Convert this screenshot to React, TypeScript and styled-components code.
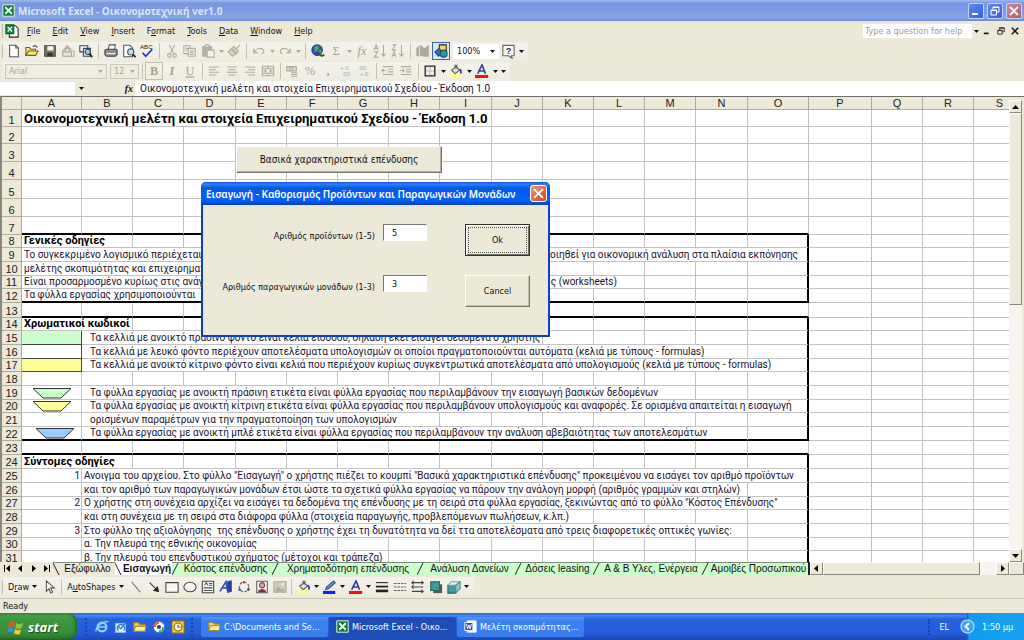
import React from "react";
import styled, { createGlobalStyle, css } from "styled-components";

const UI = '"DejaVu Sans Condensed", "DejaVu Sans", "Noto Sans", sans-serif';
const SHEET = '"Liberation Sans", Arial, sans-serif';
const CELL = 'Roboto, "Liberation Sans", sans-serif';
const FACE = "#ece9d8";
const LINE = "#c3c3c6";

const Global = createGlobalStyle`
  * { box-sizing: border-box; }
  body { margin: 0; font-family: ${UI}; font-size: 9px; color: #111; }
  button, input, select { font: inherit; color: inherit; margin: 0; padding: 0; border: 0; border-radius: 0; background: none; outline: 0; }
  svg { display: block; flex: none; }
`;

const Desktop = styled.div`
  position: relative;
  display: flex;
  flex-direction: column;
  height: 100vh;
  overflow: hidden;
  background: ${FACE};
`;

/* ---------- window chrome ---------- */
const TitleBar = styled.header`
  display: flex;
  align-items: center;
  gap: 3px;
  height: 21px;
  flex: none;
  padding: 0 2px;
  background: linear-gradient(#9db8ef 0, #7c98e2 3px, #7b97e0 10px, #84a8ec 18px, #6f86cf 21px);
  color: #dbe4f8;
`;
const WindowTitle = styled.h1`
  flex: 1;
  margin: 0;
  font: bold 10px/20px "Noto Sans", sans-serif;
  white-space: nowrap;
`;
const CaptionButton = styled.button<{ $close?: boolean }>`
  display: grid;
  place-items: center;
  width: 16px;
  height: 16px;
  border: 1px solid #c3d2f5;
  border-radius: 2px;
  background: ${(p) => (p.$close ? "linear-gradient(135deg,#c98a9b,#b05a6c)" : "linear-gradient(135deg,#5e85ee,#3a62dd)")};
`;
const MenuBar = styled.nav`
  display: flex;
  align-items: center;
  height: 20px;
  flex: none;
  padding: 0 2px;
`;
const Menus = styled.div`
  display: flex;
  gap: 12px;
  flex: 1;
  padding-left: 8px;
`;
const MenuItem = styled.button`
  line-height: 14px;
  white-space: nowrap;
`;
const Grip = styled.span`
  width: 1px;
  height: 14px;
  margin-right: 2px;
  background: #c0bdac;
`;
const Toolbar = styled.div<{ $h: number }>`
  display: flex;
  align-items: center;
  height: ${(p) => p.$h}px;
  flex: none;
  padding-left: 2px;
`;
const Bar = styled.div`
  display: flex;
  align-items: center;
  height: 19px;
  padding-right: 3px;
  border-radius: 2px;
  background: linear-gradient(#f3f2ea, #eeece0);
`;
const ToolButton = styled.button<{ $boxed?: "grey" | "blue" }>`
  display: grid;
  place-items: center;
  width: 18px;
  height: 18px;
  ${(p) => p.$boxed === "grey" && css`border: 1px solid #c2bfae;`}
  ${(p) => p.$boxed === "blue" && css`border: 1px solid #3a62b4; background: #dfe6f4;`}
`;
const DropButton = styled.button`
  display: grid;
  place-items: center;
  width: 8px;
  height: 18px;
`;
const Divider = styled.span<{ $w: number }>`
  width: ${(p) => p.$w}px;
  height: 16px;
  background: linear-gradient(#c5c2b2, #c5c2b2) center / 1px 100% no-repeat;
`;
const TextButton = styled.button`
  display: flex;
  align-items: center;
  gap: 3px;
  height: 18px;
  padding: 0 3px;
  white-space: nowrap;
`;
const Combo = styled.label<{ $w: number; $off?: boolean }>`
  display: flex;
  align-items: center;
  width: ${(p) => p.$w}px;
  height: 15px;
  margin-left: 3px;
  padding: 0 3px;
  border: 1px solid ${(p) => (p.$off ? "#cac7b8" : "#fff")};
  background: ${(p) => (p.$off ? "#efede1" : "#fff")};
  color: ${(p) => (p.$off ? "#aaa799" : "#111")};
  select { flex: 1; min-width: 0; appearance: none; }
`;
const HelpBox = styled.label`
  display: flex;
  align-items: center;
  width: 117px;
  height: 14px;
  background: #fff;
  input { flex: 1; min-width: 0; padding-left: 2px; }
  input::placeholder { color: #9b9b9b; opacity: 1; }
  span { display: grid; place-items: center; width: 8px; height: 14px; background: ${FACE}; }
`;
const DocButton = styled.button`
  display: grid;
  place-items: center;
  width: 14px;
  height: 14px;
`;
const FormulaBar = styled.div`
  display: flex;
  align-items: center;
  height: 15px;
  flex: none;
  font: 10px/14px ${CELL};
`;
const NameBox = styled.input`
  && { width: 75px; height: 13px; background: #fff; }
`;
const NameGap = styled.span`
  display: flex;
  align-items: center;
  justify-content: space-between;
  width: 60px;
  padding: 0 2px 0 4px;
`;
const Fx = styled.i`
  font: italic bold 10px/12px "Liberation Serif", serif;
`;
const FormulaInput = styled.input`
  && { flex: 1; height: 15px; padding-left: 5px; background: #fff; color: #1a1430; }
`;

/* ---------- worksheet ---------- */
const SheetFrame = styled.main`
  display: flex;
  flex: 1;
  min-height: 0;
  border-top: 1px solid #716f64;
  border-left: 2px solid #8a887c;
`;
const SheetView = styled.div`
  position: relative;
  flex: 1;
  min-width: 0;
  overflow: hidden;
  background: #fff;
`;
const Grid = styled.table`
  width: 100%;
  table-layout: fixed;
  border-collapse: separate;
  border-spacing: 0;
  font: 10px/12px ${CELL};
  color: #1a1430;
`;
const Head = styled.th`
  padding: 0;
  border-right: 1px solid #b0ad9d;
  border-bottom: 1px solid #b0ad9d;
  background: ${FACE};
  color: #222;
  font: 11px/12px ${SHEET};
  text-align: center;
  vertical-align: bottom;
  overflow: hidden;
`;
type Fill = "green" | "yellow" | "white";
const fills = { green: "#ccffcc", yellow: "#ffff99", white: "#ffffff" };
const Cell = styled.td<{ $bottom?: boolean; $side?: boolean; $title?: "big" | "small"; $pad?: number; $end?: number; $fill?: Fill }>`
  padding: 0 ${(p) => p.$end ?? 2}px 0 ${(p) => p.$pad ?? 2}px;
  border-right: ${(p) => (p.$side ? "2px solid #000" : `1px solid ${LINE}`)};
  border-bottom: ${(p) => (p.$bottom ? "2px solid #000" : `1px solid ${LINE}`)};
  white-space: nowrap;
  vertical-align: bottom;
  text-align: ${(p) => (p.$end !== undefined ? "right" : "left")};
  ${(p) => p.$title === "small" && css`font-size: 11px; font-weight: bold; color: #000;`}
  ${(p) => p.$title === "big" && css`font-size: 13px; line-height: 15px; font-weight: bold; color: #000;`}
  ${(p) => p.$fill && css`
    background: ${fills[p.$fill]};
    border-right-color: #444;
    border-bottom-color: #444;
  `}
  svg { margin: 0 auto; }
`;
const Line = styled.tr<{ $h: number }>`
  height: ${(p) => p.$h}px;
  td, th { height: ${(p) => p.$h}px; }
`;
const SheetButton = styled.button`
  && {
    position: absolute;
    left: 234px;
    top: 49px;
    width: 206px;
    height: 27px;
    border: 1px solid;
    border-color: #fff #77756a #77756a #fff;
    box-shadow: inset -1px -1px #b5b2a2;
    background: ${FACE};
    font: 10px/14px ${UI};
  }
`;
const VScroll = styled.div`
  display: flex;
  flex-direction: column;
  width: 15px;
  padding: 3px 2px 0 0;
  background: ${FACE};
`;
const ScrollButton = styled.button`
  && {
    display: grid;
    place-items: center;
    width: 13px;
    height: 13px;
    flex: none;
    border: 1px solid;
    border-color: #fff #8a887c #8a887c #fff;
    background: ${FACE};
  }
`;
const Track = styled.div`
  display: flex;
  flex: 1;
  background: #f6f5ef;
`;
const Thumb = styled.span<{ $w: string; $h: string }>`
  width: ${(p) => p.$w};
  height: ${(p) => p.$h};
  border: 1px solid;
  border-color: #fff #8a887c #8a887c #fff;
  background: ${FACE};
`;

/* ---------- sheet tabs ---------- */
const TabStrip = styled.div`
  display: flex;
  height: 13px;
  flex: none;
  padding-left: 1px;
  background: ${FACE};
`;
const TabNav = styled.button`
  display: grid;
  place-items: center;
  width: 13px;
  height: 13px;
`;
const Tab = styled.button<{ $w: number; $active?: boolean; $plain?: boolean }>`
  && {
    display: flex;
    align-items: center;
    width: ${(p) => p.$w}px;
    height: 13px;
    border-top: 1px solid ${(p) => (p.$active ? "#fff" : "#7d8d7d")};
    background: ${(p) => (p.$active ? "#fff" : p.$plain ? FACE : "#ccffcc")};
    font: ${(p) => (p.$active ? "bold" : "normal")} 10px/12px ${SHEET};
    white-space: nowrap;
  }
  span { flex: 1; text-align: center; }
`;
const HScroll = styled.div`
  display: flex;
  flex: 1;
  border-left: 2px solid #222;
`;

const StatusBar = styled.footer`
  height: 15px;
  flex: none;
  padding-left: 3px;
  border-top: 1px solid #c9c6b6;
  line-height: 14px;
`;

/* ---------- taskbar ---------- */
const TaskBar = styled.footer`
  display: flex;
  align-items: center;
  height: 27px;
  flex: none;
  background: linear-gradient(#2a66d8 0, #3f87f0 3px, #2862dc 6px, #245bdb 20px, #1d48b4 27px);
  color: #fff;
`;
const StartButton = styled.button`
  && {
    display: flex;
    align-items: center;
    gap: 4px;
    width: 77px;
    height: 25px;
    padding-left: 8px;
    border-radius: 0 8px 8px 0;
    background: linear-gradient(#4fa34f 0, #3f983f 5px, #37903a 18px, #2a762b 25px);
    box-shadow: inset -2px 0 3px #23692a;
    color: #fff;
    font: italic bold 13px/18px "Open Sans", sans-serif;
    text-shadow: 1px 1px 1px #1c4d1c;
  }
`;
const QuickLaunch = styled.div`
  display: flex;
  align-items: center;
  gap: 4px;
  width: 108px;
  margin: 0 8px;
  padding-left: 7px;
  border-left: 2px dotted #1b44a8;
  border-right: 2px dotted #1b44a8;
`;
const IconButton = styled.button`
  display: grid;
  place-items: center;
  width: 15px;
  height: 18px;
`;
const Task = styled.button<{ $active?: boolean }>`
  && {
    display: flex;
    align-items: center;
    gap: 3px;
    width: 127px;
    height: 20px;
    margin-right: 1px;
    padding-left: 7px;
    border-radius: 2px;
    background: ${(p) => (p.$active ? "#1e4eb5" : "linear-gradient(#5a96f8, #3c80f2 4px, #3a7cec)")};
    color: #fff;
    white-space: nowrap;
  }
`;
const Tray = styled.div`
  display: flex;
  align-items: center;
  margin-left: auto;
  height: 27px;
`;
const Language = styled.button`
  && { color: #fff; margin-right: 11px; padding-left: 9px; border-left: 2px dotted #1b44a8; line-height: 16px; }
`;
const Clock = styled.div`
  display: flex;
  align-items: center;
  gap: 7px;
  width: 64px;
  height: 27px;
  background: linear-gradient(90deg, transparent 7px, #0f5fb8 7px, #129bea 9px, #18a2ee);
  white-space: nowrap;
`;

/* ---------- dialog ---------- */
const Dialog = styled.form`
  position: absolute;
  left: 201px;
  top: 182px;
  width: 349px;
  height: 155px;
  border: 2px solid #0a3fd0;
  border-top: 0;
  border-radius: 5px 5px 0 0;
  background: ${FACE};
`;
const DialogTitle = styled.div`
  display: flex;
  align-items: center;
  justify-content: space-between;
  height: 23px;
  margin: 0 -2px;
  padding: 0 3px 0 5px;
  border-radius: 5px 5px 0 0;
  background: linear-gradient(#0a4fd6 0, #2f80fb 2px, #0558e6 6px, #0562f6 18px, #0440c4 23px);
  color: #fff;
  h2 { margin: 0; font: 600 10px/20px "Noto Sans", sans-serif; white-space: nowrap; }
`;
const DialogClose = styled.button`
  && {
    display: grid;
    place-items: center;
    width: 17px;
    height: 17px;
    border: 1px solid #fff;
    border-radius: 3px;
    background: linear-gradient(135deg, #f0937a, #d8431c);
  }
`;
const Fields = styled.div`
  display: grid;
  grid-template-columns: 172px 44px 65px;
  grid-auto-rows: 32px;
  row-gap: 19px;
  padding: 19px 0 0 0;
  label { padding-top: 6px; line-height: 12px; text-align: right; white-space: nowrap; }
`;
const NumberBox = styled.input`
  && {
    width: 44px;
    height: 17px;
    margin-left: 8px;
    padding-left: 8px;
    border: 1px solid;
    border-color: #77756a #fff #fff #77756a;
    background: #fff;
  }
`;
const PushButton = styled.button<{ $primary?: boolean }>`
  && {
    width: 65px;
    height: 32px;
    margin-left: 46px;
    border: 1px solid;
    border-color: ${(p) => (p.$primary ? "#333" : "#fff #77756a #77756a #fff")};
    box-shadow: ${(p) => (p.$primary ? "inset 1px 1px #fff, inset -1px -1px #77756a" : "inset -1px -1px #c5c2b2")};
    ${(p) => p.$primary && css`outline: 1px dotted #555; outline-offset: -4px;`}
  }
`;

/* ---------- drawings ---------- */
const G = "#aeab9c";
const Arrow = ({ c = "#111" }: { c?: string }) => (
  <svg width="5" height="3" viewBox="0 0 5 3"><path d="M0 0h5L2.500 3z" fill={c} /></svg>
);
const Ic = ({ children, s = 14 }: { children: React.ReactNode; s?: number }) => (
  <svg width={s} height={s} viewBox="0 0 16 16" fill="none" stroke="#222" strokeWidth="1.2">{children}</svg>
);
const LetterA = "M1 7l2.500-6L6 7M2 5h3";
const LetterZ = "M1.500 1h4L1.500 7h4.500";
const Sort = ({ up }: { up?: boolean }) => (
  <Ic>
    <path d={up ? LetterA : LetterZ} stroke={G} />
    <g transform="translate(0 8)"><path d={up ? LetterZ : LetterA} stroke={G} /></g>
    <path d="M12 1v13M9.500 11l2.500 3 2.500-3" stroke={G} />
  </Ic>
);
const Glyph = ({ t, italic, bold, under, color = "#a4a192" }: { t: string; italic?: boolean; bold?: boolean; under?: boolean; color?: string }) => (
  <Ic><text x="8" y="13" textAnchor="middle" fontSize="14" fill={color} stroke="none" fontFamily="Liberation Serif"
    fontStyle={italic ? "italic" : "normal"} fontWeight={bold ? "bold" : "normal"} textDecoration={under ? "underline" : "none"}>{t}</text></Ic>
);
const Lines = ({ k }: { k: "l" | "c" | "r" }) => {
  const x = { l: 2, c: 4, r: 6 }[k];
  return <Ic><path d={`M2 3.500h12M${x} 6.500h8M2 9.500h12M${x} 12.500h8`} stroke={G} /></Ic>;
};
const Decimals = ({ a, b }: { a: string; b: string }) => (
  <Ic>
    <text x="1" y="7" fontSize="7" fill={G} stroke="none" fontFamily="Liberation Sans">{a}</text>
    <text x="3" y="14" fontSize="7" fill={G} stroke="none" fontFamily="Liberation Sans">{b}</text>
  </Ic>
);
const Bucket = () => (
  <Ic><path d="M1 11.500h12v4H1z" fill="#ffff80" stroke="none" /><path d="M3 7l5-4 4 4-5 4z" fill="#dfe2ee" stroke="#555" /><path d="M7 5V1.500h2V5" stroke="#555" /><path d="M12 6c2 1 2 3 1.500 5" stroke="#3347a5" strokeWidth="2" /></Ic>
);
const FontColor = () => (
  <Ic><path d="M0 12.500h15V16H0z" fill="#f01010" stroke="none" /><path d="M3 11L8 1l4 10M5 8h6" stroke="#2c4391" strokeWidth="1.800" /></Ic>
);
const PenColor = () => (
  <Ic><path d="M0 12.500h14V16H0z" fill="#1020f0" stroke="none" /><path d="M3 11l1-3 8-7 2 2-8 7z" fill="#7f96cf" stroke="#334a94" /></Ic>
);
const ExcelLogo = ({ s }: { s: number }) => (
  <Ic s={s}><path d="M1 1h14v14H1z" fill="#0d7a33" stroke="#e8f3e8" /><path d="M4 4l8 8M12 4l-8 8" stroke="#fff" strokeWidth="2.200" /></Ic>
);
const WorkbookLogo = () => (
  <Ic><path d="M5 2h7l3 3v10H5z" fill="#fff" stroke="#222" /><path d="M1 1h9v10H1z" fill="#0d8a38" stroke="#0a5c26" /><path d="M3 3.500l5 5M8 3.500l-5 5" stroke="#fff" strokeWidth="1.500" /></Ic>
);
const Folder = ({ s = 14 }: { s?: number }) => (
  <Ic s={s}><path d="M1 13V3h5l1.500 2H14v8z" fill="#f8d66a" stroke="#a8842a" /><path d="M1 13l2-6h12l-1.500 6z" fill="#fff0a0" stroke="#a8842a" /></Ic>
);
const Trapezoid = ({ c }: { c: string }) => (
  <svg width="40" height="11" viewBox="0 0 40 11"><path d="M1 .5h38l-10 9.500H11z" fill={c} stroke="#333" /></svg>
);
const Tri = ({ d }: { d: string }) => <svg width="9" height="7" viewBox="0 0 9 7"><path d={d} fill="#000" /></svg>;
const ScrollArrow = ({ up }: { up?: boolean }) => (
  <svg width="7" height="4" viewBox="0 0 7 4"><path d={up ? "M0 4h7L3.500 0z" : "M0 0h7L3.500 4z"} fill="#000" /></svg>
);
const Slash = ({ back }: { back?: boolean }) => (
  <svg width="7" height="12" viewBox="0 0 7 12"><path d={back ? "M0 0L6 12" : "M6 0L0 12"} stroke="#222" fill="none" /></svg>
);
const Cross = ({ c, s = 10 }: { c: string; s?: number }) => (
  <svg width={s} height={s} viewBox="0 0 10 10"><path d="M1 1l8 8M9 1L1 9" stroke={c} strokeWidth="1.800" /></svg>
);
const Restore = ({ c, s = 10 }: { c: string; s?: number }) => (
  <svg width={s} height={s} viewBox="0 0 10 10" fill="none" stroke={c}><path d="M3 3V1h6v5H7M3 1.500h6" /><path d="M1 4h5.500v5H1zM1 4.500h5.500" /></svg>
);
const Minus = ({ c, s = 10 }: { c: string; s?: number }) => (
  <svg width={s} height={s} viewBox="0 0 10 10"><path d="M1 7h6v2H1z" fill={c} /></svg>
);

const icons: Record<string, React.ReactNode> = {
  New: <Ic><path d="M3 1.500h7l3 3v10H3z" fill="#fff" stroke="#555" /><path d="M10 1.500v3h3" stroke="#555" /></Ic>,
  Open: <Ic><path d="M1 13V4h4l1.500 2H12v2" fill="#f6e58a" stroke="#6b6020" /><path d="M1 13l3-5h11l-3 5z" fill="#fbe96b" stroke="#6b6020" /><path d="M9 3c2-2 4-1 5 1" stroke="#333" /></Ic>,
  Save: <Ic><path d="M2 2h12v12H2z" fill="#77775a" stroke="#444" /><path d="M5 2.500h7v5H5z" fill="#f2f2ee" stroke="none" /><path d="M5 10h6v4H5z" fill="#333" stroke="none" /></Ic>,
  Permission: <Ic><path d="M2 14V8l5-6 5 5M2 9h10v5H2zM5 9V6l2-2 3 3v2" stroke={G} fill="#e4e2d6" /><path d="M12 8h3v6h-3" stroke={G} /></Ic>,
  Search: <Ic><path d="M1 2h9v7H1z" fill="#fff" stroke="#345" /><path d="M5 5h8v9H5z" fill="#dbe7ef" stroke="#345" /><circle cx="10" cy="9" r="3" fill="#9fd0e4" stroke="#444" /><path d="M12 11l3 4" strokeWidth="2" /></Ic>,
  Print: <Ic><path d="M5 6l1-5h7l-1 5" fill="#fff" stroke="#555" /><path d="M1 7l2-1h11l1 1v5l-2 2H3l-2-2z" fill="#8e8e92" stroke="#444" /><path d="M3 11h10" stroke="#fff" /></Ic>,
  Preview: <Ic><path d="M2 1.500h7l3 3v10H2z" fill="#fff" stroke="#555" /><circle cx="10" cy="9" r="3.500" fill="#b9e0ea" stroke="#444" /><path d="M12.500 12l3 3" strokeWidth="2" /></Ic>,
  Spelling: <Ic><text x="0" y="6" fontSize="7" fill="#222" stroke="none" fontFamily="Liberation Sans">ABC</text><path d="M3 10l3.500 4L14 6" stroke="#2335c2" strokeWidth="2" /></Ic>,
  Cut: <Ic><path d="M5 1l5 10M11 1L6 11" stroke={G} /><circle cx="5" cy="13" r="2" stroke={G} /><circle cx="11" cy="13" r="2" stroke={G} /></Ic>,
  Copy: <Ic><path d="M1 2h7v9H1z" stroke={G} /><path d="M6 5h8v9H6zM8 8h4M8 10h4M8 12h4M3 5h3M3 7h2" fill="#eeece0" stroke={G} /></Ic>,
  Paste: <Ic><path d="M2 3h10v11H2z" fill="#b7b4a5" stroke={G} /><path d="M5 1h4v3H5z" fill="#eee" stroke={G} /><path d="M7 7h8v8H7z" fill="#f2f1e8" stroke={G} /></Ic>,
  Painter: <Ic><path d="M15 1l-5 5M8 3l5 5-2 3-6-6zM5 6l5 5-4 3-5-5z" stroke={G} fill="#d4d1c3" /></Ic>,
  Undo: <Ic><path d="M2 5v5h5M2.500 9.500C5 4 11 4 13 7c1 2 0 4-2 4" stroke={G} /></Ic>,
  Redo: <Ic><path d="M14 5v5H9M13.500 9.500C11 4 5 4 3 7c-1 2 0 4 2 4" stroke={G} /></Ic>,
  Hyperlink: <Ic><circle cx="7" cy="7" r="6" fill="#2d5fc4" stroke="#223c80" /><path d="M4 3l4-1 1 3-4 4zM9 8l3-2-1 5z" fill="#59ad5b" stroke="none" /><path d="M6 12c0-2 3-2 4 0s4 2 5 0" stroke="#444" strokeWidth="2" /></Ic>,
  Sum: <Glyph t="Σ" />,
  Function: <Glyph t="fx" italic />,
  Ascending: <Sort up />,
  Descending: <Sort />,
  Chart: <Ic><path d="M1 14V5l2-2v11M5 14V2l3 2v10M9 14V5h2l3-3v12z" fill={G} stroke={G} /></Ic>,
  Drawing: <Ic><path d="M6 1h8v8H6z" fill="#f4e04d" /><path d="M1 9l5-4 4 5-5 4z" fill="#3173c9" stroke="#1d3f86" /><circle cx="11" cy="11" r="4" fill="#2a9aa8" stroke="#14545c" /></Ic>,
  Help: <Ic s={15}><path d="M2 1.500h12v11h-3l1 3-4-3H2z" fill="#fbfaf5" stroke="#666" /><text x="8" y="11" textAnchor="middle" fontSize="10" fontWeight="bold" fill="#333" stroke="none" fontFamily="Liberation Sans">?</text></Ic>,
  Bold: <Glyph t="B" bold />,
  Italic: <Glyph t="I" italic bold />,
  Underline: <Glyph t="U" under />,
  "Align left": <Lines k="l" />,
  Center: <Lines k="c" />,
  "Align right": <Lines k="r" />,
  Merge: <Ic><path d="M1.500 2.500h13v11h-13zM1.500 5.500h13M1.500 10.500h13M8 2v3M8 11v3M3 8h3M13 8h-3M6 8L5 7v2zM10 8l1-1v2z" stroke={G} /></Ic>,
  Currency: <Ic><path d="M2 3h11v5H2z" stroke={G} fill="#dcdacd" /><circle cx="7" cy="6" r="2" stroke={G} /><path d="M7 10h7M7 12h7M7 14h7" stroke={G} /></Ic>,
  Percent: <Glyph t="%" />,
  Comma: <Glyph t="," bold />,
  "Increase decimal": <Decimals a="+.0" b=".00" />,
  "Decrease decimal": <Decimals a=".00" b="+.0" />,
  Outdent: <Ic><path d="M2 3h12M8 6h6M8 9h6M2 12h12M6 7.500H1M3 5.500l-2 2 2 2" stroke={G} /></Ic>,
  Indent: <Ic><path d="M2 3h12M8 6h6M8 9h6M2 12h12M1 7.500h5M4 5.500l2 2-2 2" stroke={G} /></Ic>,
  Borders: <Ic><path d="M8 3v10M3 8h10" stroke="#bbb" /><path d="M2.500 2.500h11v11h-11z" strokeWidth="1.500" /></Ic>,
  "Fill colour": <Bucket />,
  "Font colour": <FontColor />,
  "Line colour": <PenColor />,
  Select: <Ic><path d="M5 1v12l3-3 2 5 2-1-2-5h4z" fill="#fff" stroke="#555" /></Ic>,
  Line: <Ic><path d="M3 2l10 12" stroke="#666" /></Ic>,
  "Arrow line": <Ic><path d="M3 3l8 8" stroke="#333" /><path d="M13 13l-5-1 4-4z" fill="#222" /></Ic>,
  Rectangle: <Ic><path d="M1 3h14v11H1z" fill="#f8f7f2" stroke="#444" /></Ic>,
  Oval: <Ic><ellipse cx="8" cy="8" rx="7" ry="5.500" fill="#f8f7f2" stroke="#444" /></Ic>,
  "Text box": <Ic><path d="M1.500 1.500h13v13h-13z" fill="#f4f4f2" stroke="#444" /><path d="M4 6l2-3 2 3M9 4h4M9 6h4M3 9h10M3 12h10" stroke="#555" /></Ic>,
  WordArt: <Ic><path d="M1 13L8 2l2 11M4 9h5" stroke="#3a55b5" strokeWidth="2" /><path d="M10 2l4-1v12l-4 1z" fill="#2d3f9e" stroke="#2d3f9e" /></Ic>,
  Diagram: <Ic><circle cx="8" cy="8" r="5.500" stroke="#555" strokeDasharray="3 2" /><circle cx="8" cy="2.500" r="1.500" fill="#bb3b3b" stroke="none" /><circle cx="3" cy="11" r="1.500" fill="#3b5fbb" stroke="none" /><circle cx="13" cy="11" r="1.500" fill="#555" stroke="none" /></Ic>,
  "Clip art": <Ic><path d="M2 1.500h12v13H2z" fill="#fff" stroke="#555" /><circle cx="8" cy="6" r="3" fill="#d8a8a0" stroke="#a03c3c" /><path d="M4 14c0-4 8-4 8 0" stroke="#a03c3c" fill="#445" /></Ic>,
  Picture: <Ic><path d="M1 2h14v12H1z" fill="#cfccbd" stroke={G} /><path d="M2 13l4-6 3 4 2-2 3 4z" fill={G} stroke="none" /><circle cx="11" cy="5" r="1.500" fill="#eee" stroke="none" /></Ic>,
  "Line style": <Ic><path d="M1 3h14" /><path d="M1 7.500h14" strokeWidth="2" /><path d="M1 12.500h14" strokeWidth="3" /></Ic>,
  "Dash style": <Ic><path d="M1 4h14M1 8h14M1 12h14" stroke="#666" strokeDasharray="3 1" /></Ic>,
  "Arrow style": <Ic><path d="M1 3h13M1 8h13M1 13h13M12 1l2 2-2 2M3 6L1 8l2 2M12 11l2 2-2 2M3 1L1 3l2 2" stroke="#444" /></Ic>,
  Shadow: <Ic><path d="M5 5h10v10H5z" fill="#555" stroke="none" /><path d="M2 2h10v10H2z" fill="#3f9a9a" stroke="#2a6464" /></Ic>,
  "3-D": <Ic><path d="M1 6h9v9H1z" fill="#3f9a9a" stroke="#2a6464" /><path d="M1 6l4-4h10l-5 4z" fill="#e9f4f4" stroke="#7a9a9a" /><path d="M10 6l5-4v8l-5 5z" fill="#9cc4c4" stroke="#5a8a8a" /></Ic>,
};

const Tool = ({ n, boxed }: { n: string; boxed?: "grey" | "blue" }) => (
  <ToolButton type="button" aria-label={n} $boxed={boxed}>{icons[n]}</ToolButton>
);
const Drop = ({ off }: { off?: boolean }) => (
  <DropButton type="button" aria-label="Options"><Arrow c={off ? G : "#111"} /></DropButton>
);
/* "|" is a divider, "v" a live drop-down arrow and "-" a disabled one */
const Tools = ({ list, gap = 7 }: { list: string[]; gap?: number }) => (
  <>{list.map((n, i) =>
    n === "|" ? <Divider key={i} $w={gap} /> : n === "v" ? <Drop key={i} /> : n === "-" ? <Drop key={i} off /> :
      <Tool key={i} n={n} boxed={n === "Bold" ? "grey" : n === "Drawing" ? "blue" : undefined} />)}</>
);

/* ---------- worksheet data ---------- */
const columns: [string, number][] = [
  ["A", 60], ["B", 51], ["C", 51], ["D", 52], ["E", 51], ["F", 51], ["G", 51], ["H", 51], ["I", 52], ["J", 51],
  ["K", 51], ["L", 51], ["M", 51], ["N", 52], ["O", 61], ["P", 63], ["Q", 51], ["R", 51], ["S", 52],
];
const heights = [17, 17, 18, 18, 19, 18, 18, 13, 14, 14, 13, 14, 15, 13, 14, 14, 13, 14, 14, 13, 14, 14, 14, 14, 14, 14, 13, 14, 14, 13, 14];

type Part = { text?: React.ReactNode; span?: number; title?: "big" | "small"; pad?: number; end?: number; fill?: Fill };
const indented = (text: string, span: number): Part => ({ text, span, pad: 8 });
const rows: Record<number, Part[]> = {
  1: [{ text: "Οικονομοτεχνική μελέτη και στοιχεία Επιχειρηματικού Σχεδίου - Έκδοση 1.0", span: 9, title: "big" }],
  8: [{ text: "Γενικές οδηγίες", span: 2, title: "small" }],
  9: [{ text: "Το συγκεκριμένο λογισμικό περιέχεται σε", span: 5 }, { text: "να χρησιμοποιηθεί για οικονομική ανάλυση στα πλαίσια εκπόνησης", span: 10, end: 9 }],
  10: [{ text: "μελέτης σκοπιμότητας και επιχειρηματικού", span: 5 }],
  11: [{ text: "Είναι προσαρμοσμένο κυρίως στις ανάγκες", span: 5 }, { text: "ς (worksheets)", span: 7, end: 27 }],
  12: [{ text: "Τα φύλλα εργασίας χρησιμοποιούνται", span: 5 }],
  14: [{ text: "Χρωματικοί κωδικοί", span: 2, title: "small" }],
  15: [{ fill: "green" }, indented("Τα κελλιά με ανοικτό πράσινο φόντο είναι κελιά εισόδου, δηλαδή εκεί εισάγει δεδομένα ο χρήστης", 9)],
  16: [{ fill: "white" }, indented("Τα κελλιά με λευκό φόντο περιέχουν αποτελέσματα υπολογισμών οι οποίοι πραγματοποιούνται αυτόματα (κελιά με τύπους - formulas)", 13)],
  17: [{ fill: "yellow" }, indented("Τα κελλιά με ανοικτό κίτρινο φόντο είναι κελιά που περιέχουν κυρίως συγκεντρωτικά αποτελέσματα από υπολογισμούς (κελιά με τύπους - formulas)", 14)],
  19: [{ text: <Trapezoid c="#ccffcc" /> }, indented("Τα φύλλα εργασίας με ανοικτή πράσινη ετικέτα είναι φύλλα εργασίας που περιλαμβάνουν την εισαγωγή βασικών δεδομένων", 12)],
  20: [{ text: <Trapezoid c="#ffff99" /> }, indented("Τα φύλλα εργασίας με ανοικτή κίτρινη ετικέτα είναι φύλλα εργασίας που περιλαμβάνουν υπολογισμούς και αναφορές. Σε ορισμένα απαιτείται η εισαγωγή", 14)],
  21: [{}, indented("ορισμένων παραμέτρων για την πραγματοποίηση των υπολογισμών", 7)],
  22: [{ text: <Trapezoid c="#99ccff" />, pad: 8 }, indented("Τα φύλλα εργασίας με ανοικτή μπλέ ετικέτα είναι φύλλα εργασίας που περιλαμβάνουν την ανάλυση αβεβαιότητας των αποτελεσμάτων", 13)],
  24: [{ text: "Σύντομες οδηγίες", span: 2, title: "small" }],
  25: [{ text: "1", end: 1 }, { text: 'Ανοιγμα του αρχείου. Στο φύλλο "Εισαγωγή" ο χρήστης πιέζει το κουμπί "Βασικά χαρακτηριστικά επένδυσης" προκειμένου να εισάγει τον αριθμό προϊόντων', span: 14 }],
  26: [{}, { text: "και τον αριθμό των παραγωγικών μονάδων έτσι ώστε τα σχετικά φύλλα εργασίας να πάρουν την ανάλογη μορφή (αριθμός γραμμών και στηλών)", span: 13 }],
  27: [{ text: "2", end: 1 }, { text: 'Ο χρήστης στη συνέχεια αρχίζει να εισάγει τα δεδομένα της επένδυσης με τη σειρά στα φύλλα εργασίας, ξεκινώντας από το φύλλο "Κόστος Επένδυσης"', span: 14 }],
  28: [{}, { text: "και στη συνέχεια με τη σειρά στα διάφορα φύλλα (στοιχεία παραγωγής, προβλεπόμενων πωλήσεων, κ.λπ.)", span: 10 }],
  29: [{ text: "3", end: 1 }, { text: "Στο φύλλο της αξιολόγησης\u00a0 της επένδυσης ο χρήστης έχει τη δυνατότητα να δεί ττα αποτελέσματα από τρεις διαφορετικές οπτικές γωνίες:", span: 13 }],
  30: [{}, { text: "α. Την πλευρά της εθνικής οικονομίας", span: 4 }],
  31: [{}, { text: "β. Την πλευρά του επενδυστικού σχήματος (μέτοχοι και τράπεζα)", span: 6 }],
};
const thickBelow = [7, 12, 13, 22, 23];
const inBlock = (r: number) => (r >= 8 && r <= 12) || (r >= 14 && r <= 22) || r >= 24;

const SheetRow = ({ n }: { n: number }) => {
  const cells: React.ReactNode[] = [];
  let col = 0;
  const push = (p: Part) => {
    const span = p.span ?? 1;
    col += span;
    cells.push(
      <Cell key={col} colSpan={span} $title={p.title} $pad={p.pad} $end={p.end} $fill={p.fill}
        $bottom={thickBelow.includes(n) && col <= 15} $side={inBlock(n) && col === 15}>{p.text}</Cell>
    );
  };
  (rows[n] ?? []).forEach(push);
  while (col < columns.length) push({});
  return <Line $h={heights[n - 1]}><Head scope="row">{n}</Head>{cells}</Line>;
};

const tabs: [string, number][] = [
  ["Εξώφυλλο", 62], ["Εισαγωγή", 57], ["Κόστος επένδυσης", 100], ["Χρηματοδότηση επένδυσης", 145],
  ["Ανάλυση Δανείων", 98], ["Δόσεις leasing", 78], ["Α & Β Υλες, Ενέργεια", 109], ["Αμοιβές Προσωπικού", 106],
];
const menus = [["", "F", "ile"], ["", "E", "dit"], ["", "V", "iew"], ["", "I", "nsert"], ["F", "o", "rmat"], ["", "T", "ools"], ["", "D", "ata"], ["", "W", "indow"], ["", "H", "elp"]];

export default function App() {
  return (
    <Desktop>
      <Global />
      <TitleBar>
        <ExcelLogo s={13} />
        <WindowTitle>Microsoft Excel - Οικονομοτεχνική ver1.0</WindowTitle>
        <CaptionButton aria-label="Minimize"><Minus c="#fff" /></CaptionButton>
        <CaptionButton aria-label="Restore"><Restore c="#fff" /></CaptionButton>
        <CaptionButton aria-label="Close" $close><Cross c="#fff" /></CaptionButton>
      </TitleBar>
      <MenuBar>
        <Grip />
        <WorkbookLogo />
        <Menus>{menus.map(([a, b, c]) => <MenuItem key={b + c}>{a}<u>{b}</u>{c}</MenuItem>)}</Menus>
        <HelpBox><input aria-label="Help question" placeholder="Type a question for help" /><span><Arrow /></span></HelpBox>
        <DocButton aria-label="Minimize workbook"><Minus c="#111" s={8} /></DocButton>
        <DocButton aria-label="Restore workbook"><Restore c="#111" s={8} /></DocButton>
        <DocButton aria-label="Close workbook"><Cross c="#111" s={8} /></DocButton>
      </MenuBar>
      <Toolbar $h={20}>
        <Bar>
          <Grip />
          <Tools list={["New", "Open", "Save", "Permission", "Search", "|", "Print", "Preview", "Spelling", "|", "Cut", "Copy", "Paste", "-", "Painter", "|", "Undo", "-", "Redo", "-", "|", "Hyperlink", "Sum", "-", "Function", "Ascending", "Descending", "|", "Chart", "Drawing"]} />
          <Combo $w={46}><select aria-label="Zoom"><option>100%</option></select><Arrow /></Combo>
          <Tools list={["Help", "v"]} />
        </Bar>
      </Toolbar>
      <Toolbar $h={20}>
        <Bar>
          <Combo $w={102} $off><select aria-label="Font"><option>Arial</option></select><Arrow c={G} /></Combo>
          <Combo $w={29} $off><select aria-label="Font size"><option>12</option></select><Arrow c={G} /></Combo>
          <Tools gap={6} list={["|", "Bold", "Italic", "Underline", "|", "Align left", "Center", "Align right", "Merge", "|", "Currency", "Percent", "Comma", "Increase decimal", "Decrease decimal", "|", "Outdent", "Indent", "|", "Borders", "v", "Fill colour", "v", "Font colour", "v", "v"]} />
        </Bar>
      </Toolbar>
      <FormulaBar>
        <NameBox aria-label="Name box" />
        <NameGap><Arrow /><Fx>fx</Fx></NameGap>
        <FormulaInput aria-label="Formula" defaultValue="Οικονομοτεχνική μελέτη και στοιχεία Επιχειρηματικού Σχεδίου - Έκδοση 1.0" />
      </FormulaBar>

      <SheetFrame>
        <SheetView>
          <Grid>
            <colgroup>
              <col style={{ width: 20 }} />
              {columns.map(([c, w]) => <col key={c} style={{ width: w }} />)}
            </colgroup>
            <thead>
              <Line $h={13}><Head />{columns.map(([c]) => <Head key={c} scope="col">{c}</Head>)}</Line>
            </thead>
            <tbody>{heights.map((_, i) => <SheetRow key={i} n={i + 1} />)}</tbody>
          </Grid>
          <SheetButton type="button">Βασικά χαρακτηριστικά επένδυσης</SheetButton>
        </SheetView>
        <VScroll>
          <ScrollButton aria-label="Scroll up"><ScrollArrow up /></ScrollButton>
          <Track><Thumb $w="13px" $h="44%" /></Track>
          <ScrollButton aria-label="Scroll down"><ScrollArrow /></ScrollButton>
        </VScroll>
      </SheetFrame>

      <TabStrip>
        <TabNav aria-label="First sheet"><Tri d="M1 0h1v7H1zM7 0v7L3 3.500z" /></TabNav>
        <TabNav aria-label="Previous sheet"><Tri d="M6 0v7L2 3.500z" /></TabNav>
        <TabNav aria-label="Next sheet"><Tri d="M3 0v7l4-3.500z" /></TabNav>
        <TabNav aria-label="Last sheet"><Tri d="M2 0v7l4-3.500zM7 0h1v7H7z" /></TabNav>
        {tabs.map(([t, w], i) => (
          <Tab key={t} $w={w} $active={i === 1} $plain={i === 0}><Slash back={i < 2} /><span>{t}</span></Tab>
        ))}
        <HScroll>
          <ScrollButton aria-label="Scroll left"><Tri d="M6 0v7L2 3.500z" /></ScrollButton>
          <Track><Thumb $w="91%" $h="13px" /></Track>
          <ScrollButton aria-label="Scroll right"><Tri d="M3 0v7l4-3.500z" /></ScrollButton>
          <Thumb $w="15px" $h="13px" />
        </HScroll>
      </TabStrip>

      <Toolbar $h={23}>
        <Bar>
          <Grip />
          <TextButton type="button"><span>D<u>r</u>aw</span><Arrow /></TextButton>
          <Tools gap={6} list={["Select", "|"]} />
          <TextButton type="button"><span>A<u>u</u>toShapes</span><Arrow /></TextButton>
          <Tools gap={6} list={["Line", "Arrow line", "Rectangle", "Oval", "Text box", "WordArt", "Diagram", "Clip art", "Picture", "|", "Fill colour", "v", "Line colour", "v", "Font colour", "v", "Line style", "Dash style", "Arrow style", "Shadow", "3-D", "v"]} />
        </Bar>
      </Toolbar>
      <StatusBar>Ready</StatusBar>

      <TaskBar>
        <StartButton>
          <Ic s={16}>
            <path d="M1 4c2-2 4-2 6-.5L6 8C4 6.500 2 7 0 8.500z" fill="#e8502a" stroke="none" />
            <path d="M8 4c2 1.500 4 1.500 7 0l-1.500 5c-2 1.500-4 1-6 0z" fill="#8cc63f" stroke="none" />
            <path d="M0 10c2-1.500 4-1.500 5.500-.5L4.500 14c-2-1.500-4-1-5.500 0z" fill="#3f86f0" stroke="none" />
            <path d="M7 10c2 1.500 4 1.500 6 .5L12 15c-2 1-4 .5-6-.5z" fill="#fbc81e" stroke="none" />
          </Ic>
          start
        </StartButton>
        <QuickLaunch>
          <IconButton aria-label="Internet Explorer"><Ic><circle cx="8" cy="8" r="5" stroke="#8fd4ff" strokeWidth="2.500" /><path d="M3 8h10M1 13C1 8 9 1 15 2" stroke="#8fd4ff" strokeWidth="1.500" /></Ic></IconButton>
          <IconButton aria-label="Outlook Express"><Ic><path d="M2 4h11v10H2z" fill="#e9f4ff" stroke="#9cc8f0" /><path d="M4 7l4 3 6-8M5 12a4 4 0 1 1 6 0" stroke="#2f7fd0" strokeWidth="1.500" /></Ic></IconButton>
          <IconButton aria-label="Folder"><Folder /></IconButton>
          <IconButton aria-label="Media Player"><Ic><circle cx="8" cy="8" r="6.500" fill="#fff" stroke="#3b76d0" /><path d="M2 8a6 6 0 0 1 6-6v6z" fill="#e65c22" stroke="none" /><path d="M8 14a6 6 0 0 0 6-6H8z" fill="#58b447" stroke="none" /><circle cx="8" cy="8" r="3" fill="#27408f" stroke="#fff" /></Ic></IconButton>
          <IconButton aria-label="Outlook"><Ic><path d="M1 1h14v14H1z" fill="#f4d250" stroke="#8a6a14" /><circle cx="8" cy="8" r="4.500" fill="#fff7d0" stroke="#7a5c10" /><path d="M8 5v3h3" stroke="#7a5c10" /></Ic></IconButton>
        </QuickLaunch>
        <Task><Folder s={13} />C:\Documents and Se...</Task>
        <Task $active><ExcelLogo s={13} />Microsoft Excel - Οικο...</Task>
        <Task><Ic s={13}><path d="M4 1h11v14H4z" fill="#fff" stroke="#dbe6ff" /><path d="M1 3h10v10H1z" fill="#2b4fa8" stroke="#fff" /><path d="M3 5l1.500 6L6 6l1.500 5L9 5" stroke="#fff" /></Ic>Μελέτη σκοπιμότητας...</Task>
        <Tray>
          <Language>EL</Language>
          <Clock>
            <Ic s={15}><circle cx="8" cy="8" r="7" fill="#3aa6f4" stroke="#bfe3ff" /><path d="M9.500 4.500L6 8l3.500 3.500" stroke="#fff" strokeWidth="2.200" /></Ic>
            <time>1:50 μμ</time>
          </Clock>
        </Tray>
      </TaskBar>

      <Dialog role="dialog" aria-labelledby="dialog-title" onSubmit={(e) => e.preventDefault()}>
        <DialogTitle>
          <h2 id="dialog-title">Εισαγωγή - Καθορισμός Προϊόντων και Παραγωγικών Μονάδων</h2>
          <DialogClose type="button" aria-label="Close dialog"><Cross c="#fff" s={11} /></DialogClose>
        </DialogTitle>
        <Fields>
          <label htmlFor="products">Αριθμός προϊόντων (1-5)</label>
          <NumberBox id="products" defaultValue="5" />
          <PushButton type="submit" $primary>Ok</PushButton>
          <label htmlFor="units">Αριθμός παραγωγικών μονάδων (1-3)</label>
          <NumberBox id="units" defaultValue="3" />
          <PushButton type="button">Cancel</PushButton>
        </Fields>
      </Dialog>
    </Desktop>
  );
}
